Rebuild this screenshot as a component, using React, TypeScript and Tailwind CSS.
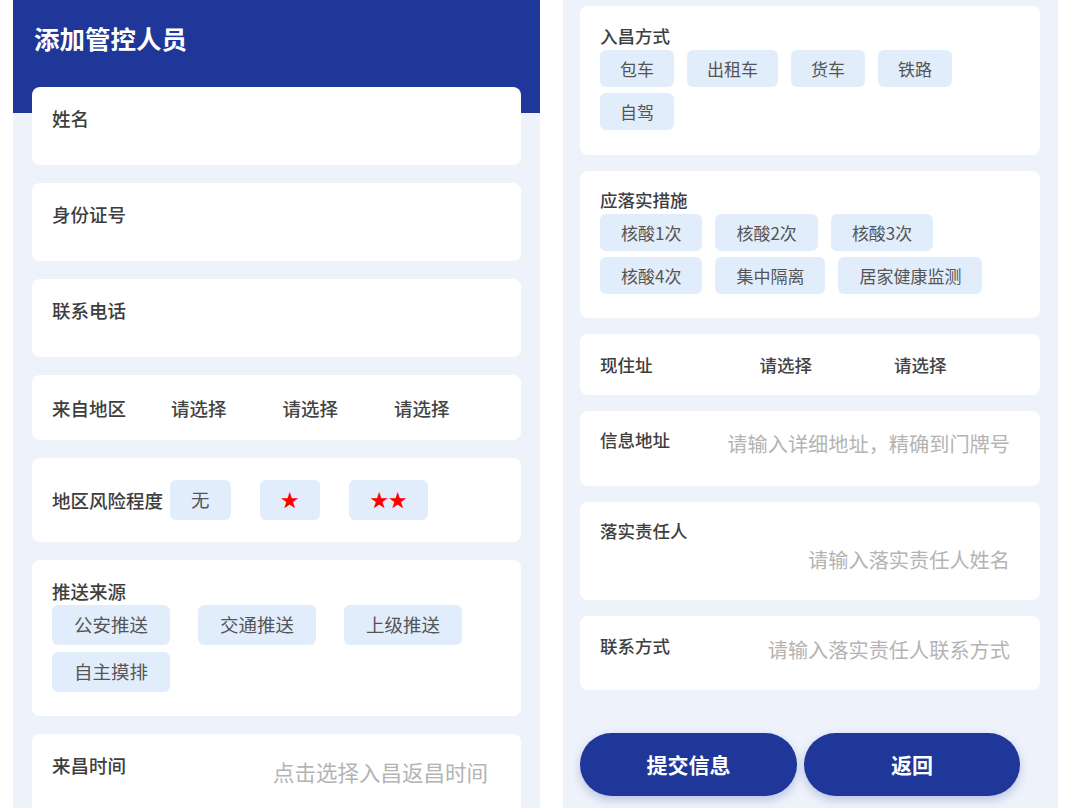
import React from "react";

const Chip = ({ children, cls }: { children: React.ReactNode; cls: string }) => (
  <div className={`flex items-center justify-center rounded-[6px] bg-[#e2edfb] text-[#555] ${cls}`}>{children}</div>
);

export default function App() {
  return (
    <div className="w-[1080px] h-[808px] bg-white flex overflow-hidden font-['Noto_Sans_CJK_SC','Noto_Sans',sans-serif]">
      {/* Left screen */}
      <div className="ml-[13px] w-[527px] h-full shrink-0 bg-[linear-gradient(#1e3799_0_113px,#eef2fb_113px)] px-[19px] flex flex-col">
        <div className="h-[87px] shrink-0 pt-[23px] pl-[2px]">
          <h1 className="text-[25.5px] leading-[30px] font-bold text-white">添加管控人员</h1>
        </div>
        <div className="flex flex-col gap-[18px] text-[18.5px] text-[#3e3e3e]">
          <div className="h-[78px] shrink-0 rounded-lg bg-white px-[20px] pt-[19px]">
            <div className="leading-[24px] font-medium">姓名</div>
          </div>
          <div className="h-[78px] shrink-0 rounded-lg bg-white px-[20px] pt-[19px]">
            <div className="leading-[24px] font-medium">身份证号</div>
          </div>
          <div className="h-[78px] shrink-0 rounded-lg bg-white px-[20px] pt-[19px]">
            <div className="leading-[24px] font-medium">联系电话</div>
          </div>
          <div className="h-[65px] shrink-0 rounded-lg bg-white px-[20px] flex items-center">
            <div className="leading-[24px] font-medium">来自地区</div>
            <div className="ml-[45px] flex gap-[56px] leading-[24px] font-medium text-[#444]">
              <span>请选择</span>
              <span>请选择</span>
              <span>请选择</span>
            </div>
          </div>
          <div className="h-[84px] shrink-0 rounded-lg bg-white px-[20px] flex items-center">
            <div className="leading-[24px] font-medium">地区风险程度</div>
            <div className="ml-[7px] flex gap-[29px]">
              <Chip cls="h-[40px] px-[21px]">无</Chip>
              <Chip cls="h-[40px] px-[21px] text-[#ff0000]">★</Chip>
              <Chip cls="h-[40px] px-[21px] text-[#ff0000]">★★</Chip>
            </div>
          </div>
          <div className="h-[156px] shrink-0 rounded-lg bg-white px-[20px] pt-[19px]">
            <div className="leading-[24px] font-medium">推送来源</div>
            <div className="mt-[2px] flex flex-wrap gap-x-[28px] gap-y-[7px] w-[420px]">
              <Chip cls="h-[40px] px-[22px]">公安推送</Chip>
              <Chip cls="h-[40px] px-[22px]">交通推送</Chip>
              <Chip cls="h-[40px] px-[22px]">上级推送</Chip>
              <Chip cls="h-[40px] px-[22px]">自主摸排</Chip>
            </div>
          </div>
          <div className="h-[100px] shrink-0 rounded-lg bg-white pl-[20px] pr-[33px] pt-[19px] flex justify-between items-start">
            <div className="leading-[24px] font-medium">来昌时间</div>
            <div className="mt-[5px] leading-[28px] text-[21.5px] text-[#b4b4b4]">点击选择入昌返昌时间</div>
          </div>
        </div>
      </div>

      {/* Right screen */}
      <div className="ml-[23px] w-[495px] h-full shrink-0 bg-[#eef2fb] pl-[17px] pr-[18px] pt-[6px] flex flex-col text-[17.5px] text-[#3e3e3e]">
        <div className="flex flex-col gap-[16px]">
          <div className="h-[149px] shrink-0 rounded-lg bg-white px-[20px] pt-[19px]">
            <div className="leading-[22px] font-medium">入昌方式</div>
            <div className="mt-[3px] flex flex-wrap gap-x-[13px] gap-y-[6px] text-[17px] w-[400px]">
              <Chip cls="h-[37px] px-[20px]">包车</Chip>
              <Chip cls="h-[37px] px-[20px]">出租车</Chip>
              <Chip cls="h-[37px] px-[20px]">货车</Chip>
              <Chip cls="h-[37px] px-[20px]">铁路</Chip>
              <Chip cls="h-[37px] px-[20px]">自驾</Chip>
            </div>
          </div>
          <div className="h-[147px] shrink-0 rounded-lg bg-white px-[20px] pt-[18px]">
            <div className="leading-[22px] font-medium">应落实措施</div>
            <div className="mt-[3px] flex flex-wrap gap-x-[13px] gap-y-[6px] text-[17px] w-[400px]">
              <Chip cls="h-[37px] px-[21px]">核酸1次</Chip>
              <Chip cls="h-[37px] px-[21px]">核酸2次</Chip>
              <Chip cls="h-[37px] px-[21px]">核酸3次</Chip>
              <Chip cls="h-[37px] px-[21px]">核酸4次</Chip>
              <Chip cls="h-[37px] px-[21px]">集中隔离</Chip>
              <Chip cls="h-[37px] px-[21px]">居家健康监测</Chip>
            </div>
          </div>
          <div className="h-[61px] shrink-0 rounded-lg bg-white px-[20px] flex items-center">
            <div className="leading-[22px] font-medium">现住址</div>
            <div className="ml-[107px] flex gap-[82px] leading-[22px] font-medium text-[#444]">
              <span>请选择</span>
              <span>请选择</span>
            </div>
          </div>
          <div className="h-[75px] shrink-0 rounded-lg bg-white pl-[20px] pr-[30px] pt-[18px] flex justify-between items-start">
            <div className="leading-[22px] font-medium">信息地址</div>
            <div className="mt-[2px] leading-[26px] text-[20.2px] text-[#b4b4b4]">请输入详细地址，精确到门牌号</div>
          </div>
          <div className="h-[98px] shrink-0 rounded-lg bg-white pl-[20px] pr-[30px] pt-[18px]">
            <div className="leading-[22px] font-medium">落实责任人</div>
            <div className="mt-[5px] leading-[26px] text-[20.2px] text-[#b4b4b4] text-right">请输入落实责任人姓名</div>
          </div>
          <div className="h-[74px] shrink-0 rounded-lg bg-white pl-[20px] pr-[30px] pt-[19px] flex justify-between items-start">
            <div className="leading-[22px] font-medium">联系方式</div>
            <div className="mt-[2px] leading-[26px] text-[20.2px] text-[#b4b4b4]">请输入落实责任人联系方式</div>
          </div>
        </div>
        <div className="mt-[43px] flex gap-[7px]">
          <button className="w-[217px] h-[63px] rounded-full bg-[#1e3799] text-white text-[21px] font-bold shadow-[0_4px_10px_rgba(30,55,153,0.25)]">提交信息</button>
          <button className="w-[216px] h-[63px] rounded-full bg-[#1e3799] text-white text-[21px] font-bold shadow-[0_4px_10px_rgba(30,55,153,0.25)]">返回</button>
        </div>
      </div>
    </div>
  );
}
